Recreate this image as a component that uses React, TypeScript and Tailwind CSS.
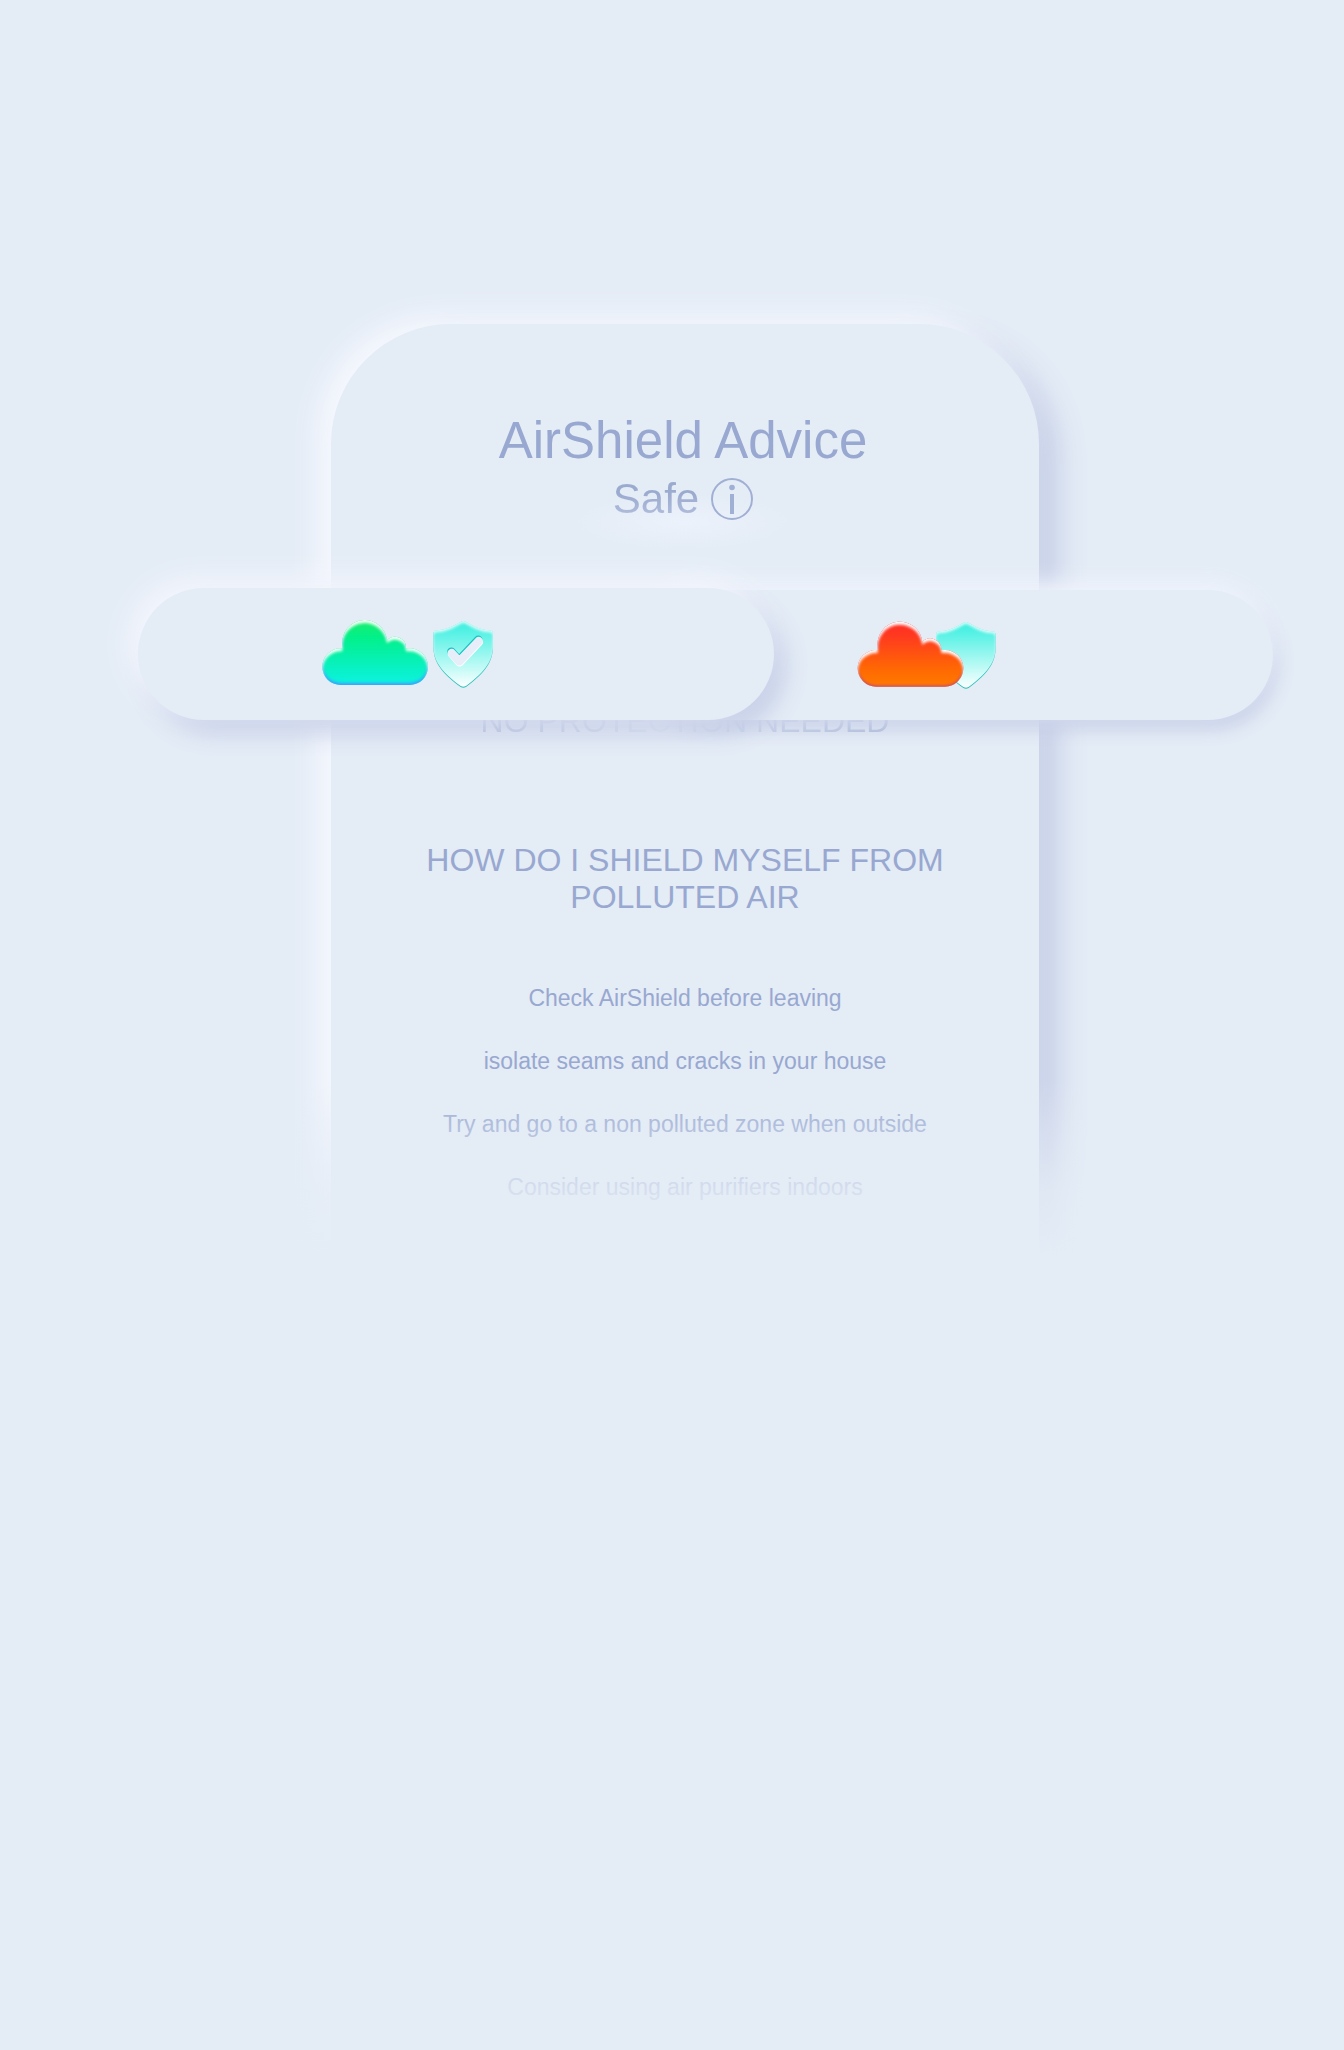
import React from "react";

const CLOUD =
  "M122 258 A55 55 0 0 1 122 148 L127 148 L127 137 A67 67 0 0 1 261 124 A33 33 0 0 1 318 148 L329 148 A55 55 0 0 1 329 258 Z";
const SHIELD =
  "M483 68 Q490 64 497 68 C520 81 541 92 568 94 Q579 95 579 105 L579 138 C579 188 560 217 498 264 Q490 269 482 264 C419 217 400 188 400 138 L400 105 Q400 95 411 94 C438 92 460 81 483 68 Z";
const CHECK = "M455 161 L478 186 L536 125";

function BevelFilter({
  id,
  light,
  dark,
  lightOffset,
  darkOffset,
  lightBlur,
  darkBlur,
}: {
  id: string;
  light: string;
  dark: string;
  lightOffset: number;
  darkOffset: number;
  lightBlur: number;
  darkBlur: number;
}) {
  return (
    <filter id={id} x="-10%" y="-10%" width="120%" height="120%" colorInterpolationFilters="sRGB">
      <feOffset in="SourceAlpha" dx="0" dy={lightOffset} result="lo" />
      <feGaussianBlur in="lo" stdDeviation={lightBlur} result="lb" />
      <feFlood floodColor={light} result="lf" />
      <feComposite in="lf" in2="lb" operator="out" result="l1" />
      <feComposite in="l1" in2="SourceAlpha" operator="in" result="l2" />
      <feOffset in="SourceAlpha" dx="0" dy={-darkOffset} result="do" />
      <feGaussianBlur in="do" stdDeviation={darkBlur} result="db" />
      <feFlood floodColor={dark} result="df" />
      <feComposite in="df" in2="db" operator="out" result="d1" />
      <feComposite in="d1" in2="SourceAlpha" operator="in" result="d2" />
      <feMerge>
        <feMergeNode in="SourceGraphic" />
        <feMergeNode in="d2" />
        <feMergeNode in="l2" />
      </feMerge>
    </filter>
  );
}

function ProtectedIcon() {
  return (
    <svg viewBox="66 60 516 210" className="h-[70px] w-[172px]" aria-hidden="true">
      <defs>
        <linearGradient id="greenCloud" x1="0" y1="0" x2="0" y2="1">
          <stop offset="0" stopColor="#1aee6c" />
          <stop offset="0.25" stopColor="#02f088" />
          <stop offset="1" stopColor="#0cf2e2" />
        </linearGradient>
        <linearGradient id="aquaShield" x1="0" y1="0" x2="0" y2="1">
          <stop offset="0" stopColor="#38eee0" />
          <stop offset="0.2" stopColor="#5cf2e6" />
          <stop offset="1" stopColor="#ffffff" />
        </linearGradient>
        <BevelFilter id="cloudBevel" light="#f6fff8" dark="#3f9cff" lightOffset={10} darkOffset={7} lightBlur={5} darkBlur={4} />
        <BevelFilter id="shieldBevel" light="#e2fbfa" dark="#10b5b0" lightOffset={6} darkOffset={4} lightBlur={4} darkBlur={1} />
        <filter id="soften" x="-20%" y="-20%" width="140%" height="140%">
          <feGaussianBlur stdDeviation="2" />
        </filter>
      </defs>
      <path d={CLOUD} fill="url(#greenCloud)" filter="url(#cloudBevel)" />
      <path d={SHIELD} fill="url(#aquaShield)" filter="url(#shieldBevel)" />
      <g fill="none" strokeWidth="25" strokeLinecap="round" strokeLinejoin="round">
        <path d={CHECK} stroke="#ffffff" transform="translate(1 4)" filter="url(#soften)" />
        <path d={CHECK} stroke="#12c4c2" transform="translate(-1 -3)" />
        <path d={CHECK} stroke="#e8eef9" transform="translate(0 1)" />
      </g>
    </svg>
  );
}

function ExposedIcon() {
  return (
    <svg viewBox="51 60 420 210" className="h-[70px] w-[140px]" aria-hidden="true">
      <defs>
        <linearGradient id="redCloud" x1="0" y1="0" x2="0" y2="1">
          <stop offset="0" stopColor="#ff2c24" />
          <stop offset="0.2" stopColor="#ff3820" />
          <stop offset="0.75" stopColor="#ff6a02" />
          <stop offset="1" stopColor="#ff7a00" />
        </linearGradient>
        <BevelFilter id="redBevel" light="#ffffff" dark="#c04080" lightOffset={10} darkOffset={4} lightBlur={5} darkBlur={4} />
      </defs>
      <path d={SHIELD} transform="translate(-112 0)" fill="url(#aquaShield)" filter="url(#shieldBevel)" />
      <path d={CLOUD} transform="translate(-14 2)" fill="url(#redCloud)" filter="url(#redBevel)" />
    </svg>
  );
}

function InfoIcon() {
  return (
    <svg viewBox="0 0 42 42" className="size-[42px]" aria-hidden="true">
      <circle cx="21" cy="21" r="20" fill="none" stroke="#a0afd4" strokeWidth="2" />
      <circle cx="21" cy="9.5" r="2.8" fill="#a0afd4" />
      <path d="M21 16 V36" stroke="#a0afd4" strokeWidth="4" />
    </svg>
  );
}

const TIPS = [
  "Check AirShield before leaving",
  "isolate seams and cracks in your house",
  "Try and go to a non polluted zone when outside",
  "Consider using air purifiers indoors",
];

export default function App() {
  return (
    <main className="relative min-h-screen overflow-hidden bg-[#e4ecf6] pt-[324px] font-['Liberation_Sans',sans-serif] text-[#98a8d0]">
      <section className="mr-[305px] ml-[331px] rounded-t-[120px] bg-[#e4ecf6] px-20 pt-[87px] pb-28 text-center shadow-[-14px_-8px_28px_#f6f8fe,18px_14px_30px_#c3cce6]">
        <header className="pr-1">
          <h1 className="text-[51px] leading-[60px]">AirShield Advice</h1>
          <div className="flex items-center justify-center gap-3 bg-[radial-gradient(ellipse_110px_28px_at_50%_62%,#ecf2fb,transparent)] pt-0.5 pb-7">
            <p className="bg-linear-to-b from-[#9baacf] from-40% to-[#b9c5e1] bg-clip-text text-[42px] leading-[52px] text-transparent">
              Safe
            </p>
            <button type="button" aria-label="About this rating">
              <InfoIcon />
            </button>
          </div>
        </header>
        <h2 className="mt-[149px] bg-linear-to-r from-[#a9b6d8] from-10% via-[#dbe4f1] via-45% to-[#a9b6d8] to-90% bg-clip-text text-[32px] leading-[38px] text-transparent">
          NO PROTECTION NEEDED
        </h2>
        <h2 className="-mx-4 mt-[102px] text-[32px] leading-[37px]">
          HOW DO I SHIELD MYSELF FROM
          <br />
          POLLUTED AIR
        </h2>
        <ul className="-mx-8 mt-[51px] text-[23px] leading-[63px]">
          {TIPS.map((tip) => (
            <li key={tip}>{tip}</li>
          ))}
        </ul>
      </section>

      <div className="absolute inset-x-0 top-[1080px] bottom-0 bg-[linear-gradient(to_bottom,transparent,#e4ecf6cc_110px,#e4ecf6_180px)]" />

      <div className="absolute top-[588px] right-[71px] left-[138px] flex justify-between">
        <button
          type="button"
          aria-label="Clean air, protected"
          className="z-10 flex h-[132px] w-[56%] shrink-0 items-center justify-center rounded-full bg-[#e4ecf6] pr-24 shadow-[-10px_-10px_28px_#f4f6fd,10px_12px_24px_#c3cce6]"
        >
          <ProtectedIcon />
        </button>
        <button
          type="button"
          aria-label="Polluted air, exposed"
          className="mt-0.5 -ml-[12%] flex h-[130px] w-[56%] shrink-0 items-center justify-center rounded-full bg-[#e4ecf6] pr-14 shadow-[0px_-8px_20px_#f0f4fc,4px_8px_18px_#c3cce6]"
        >
          <ExposedIcon />
        </button>
      </div>
    </main>
  );
}
